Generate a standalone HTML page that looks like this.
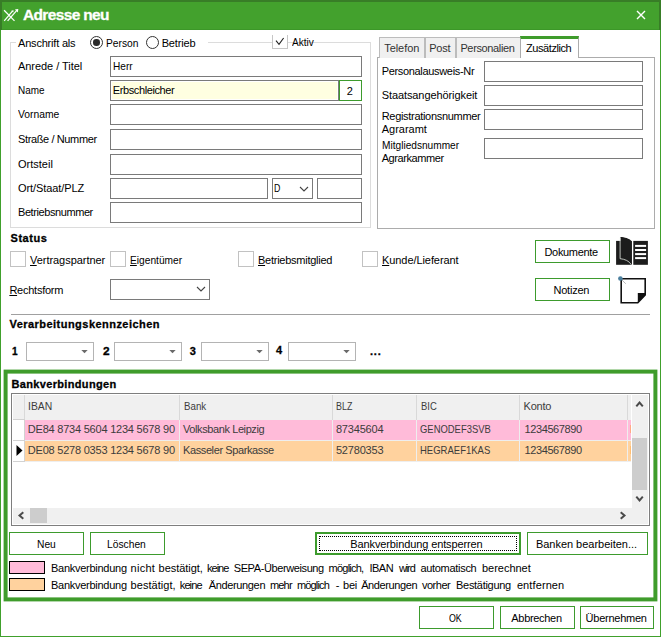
<!DOCTYPE html>
<html lang="de"><head><meta charset="utf-8"><title>Adresse neu</title>
<style>
*{box-sizing:border-box;margin:0;padding:0}
html,body{width:661px;height:637px;overflow:hidden;background:#fff}
body{font-family:"Liberation Sans","DejaVu Sans",sans-serif;font-size:11px;color:#000;position:relative}
.a{position:absolute;white-space:nowrap}
.t{position:absolute;white-space:nowrap;line-height:13px;height:13px}
.b{font-weight:bold;-webkit-text-stroke:0.3px currentColor}
.in{position:absolute;border:1px solid #7a7a7a;background:#fff;height:21px}
.cmb{position:absolute;border:1px solid #b4b4b4;background:#fff;height:19px;width:68px}
.btn{position:absolute;border:1px solid #3d9b2d;background:#fff;height:23px}
.cb{position:absolute;width:16px;height:16px;border:1px solid #c2c2c2;background:#fff}
.rd{position:absolute;width:13px;height:13px;border:1px solid #333;border-radius:50%;background:#fff}
.tab{position:absolute;top:37px;height:21px;border:1px solid #bcbcbc;border-bottom:none;background:#f0f0f0}
.hs{position:absolute;top:395px;width:1px;height:25px;background:#d9d9d9}
.rs{position:absolute;top:420px;width:1px;height:42px;background:#eee}
u{text-decoration:underline}
</style></head><body>
<!-- window frame -->
<div class="a" style="left:0;top:0;width:661px;height:637px;background:#40a02c"></div>
<div class="a" style="left:1px;top:30px;width:659px;height:606px;background:#fff"></div>
<div class="a" style="left:0;top:0;width:661px;height:30px;background:#387d27"></div>
<div class="a" style="left:2px;top:2px;width:657px;height:28px;background:#43a12d"></div>
<div class="a" style="left:2px;top:29px;width:657px;height:1px;background:#3c9728"></div>
<!-- title -->
<svg class="a" style="left:3px;top:8px" width="17" height="14" viewBox="0 0 17 14"><g stroke="#fff" stroke-width="1.25" fill="none"><path d="M1.1 2.3 L11.5 12.9"/><path d="M1.2 12.9 L9.7 2.9"/><path d="M4.6 12.9 L14.5 1.6"/></g><path d="M11.9 1.5 L15.3 1 L14.9 4.4 Z" fill="#fff"/><path d="M8.2 2.7 L10.7 2.2 L10.3 4.5 Z" fill="#fff" fill-opacity="0.9"/></svg>
<div class="a b" style="left:23px;top:5.5px;font-size:15.5px;line-height:18px;color:#fff;letter-spacing:-0.65px">Adresse neu</div>
<svg class="a" style="left:636px;top:10px" width="10" height="10" viewBox="0 0 10 10"><path d="M1 1 L9 9 M9 1 L1 9" stroke="#fff" stroke-width="1.4" fill="none"/></svg>

<!-- groupbox Anschrift -->
<div class="a" style="left:10px;top:42px;width:361px;height:186px;border:1px solid #dcdcdc"></div>
<div class="a" style="left:16px;top:36px;width:192px;height:14px;background:#fff"></div>
<div class="rd" style="left:90px;top:36px"></div>
<div class="a" style="left:93.2px;top:39.2px;width:6.6px;height:6.6px;border-radius:50%;background:#2a2a2a"></div>
<div class="rd" style="left:146px;top:36px"></div>
<div class="a" style="left:272px;top:35px;width:16px;height:14px;border:1px solid #c6c6c6;border-top:none;background:#fff"></div>
<svg class="a" style="left:274px;top:36px" width="12" height="11" viewBox="0 0 12 11"><path d="M2 4.7 L5 8.3 L9.6 2" stroke="#222" stroke-width="1.1" fill="none"/></svg>

<div class="in" style="left:110px;top:56px;width:252px"></div>
<div class="in" style="left:110px;top:80px;width:229px"></div><div class="a" style="left:112px;top:82px;width:225px;height:17px;background:#ffffe1"></div>
<div class="in" style="left:339px;top:80px;width:23px;border-color:#3d9b2d"></div>
<div class="in" style="left:110px;top:104px;width:252px"></div>
<div class="in" style="left:110px;top:129px;width:252px"></div>
<div class="in" style="left:110px;top:154px;width:252px"></div>
<div class="in" style="left:110px;top:178px;width:158px"></div>
<div class="in" style="left:272px;top:178px;width:41px"></div>
<svg class="a" style="left:299.3px;top:185.6px" width="10" height="7" viewBox="0 0 10 7"><path d="M1 1 L5 5 L9 1" stroke="#444" stroke-width="1.1" fill="none"/></svg>
<div class="in" style="left:317px;top:178px;width:45px"></div>
<div class="in" style="left:110px;top:202px;width:252px"></div>

<!-- tabs -->
<div class="a" style="left:377px;top:57px;width:278px;height:172px;border:1px solid #acacac;background:#fff"></div>
<div class="tab" style="left:379px;width:46px"></div>
<div class="tab" style="left:425px;width:31px"></div>
<div class="tab" style="left:456px;width:65px"></div>
<div class="a" style="left:520px;top:36px;width:59px;height:22px;border:1px solid #acacac;border-bottom:none;border-top:3px solid #3f9c2c;background:#fff"></div>
<div class="in" style="left:484px;top:61px;width:159px"></div>
<div class="in" style="left:484px;top:85px;width:159px"></div>
<div class="in" style="left:484px;top:109px;width:159px"></div>
<div class="in" style="left:484px;top:138px;width:159px"></div>

<!-- status -->
<div class="cb" style="left:10px;top:251px"></div>
<div class="cb" style="left:110px;top:251px"></div>
<div class="cb" style="left:238px;top:251px"></div>
<div class="cb" style="left:362px;top:251px"></div>
<div class="btn" style="left:535px;top:240px;width:75px"></div>
<div class="btn" style="left:535px;top:278px;width:75px"></div>
<!-- book icon -->
<svg class="a" style="left:615px;top:236px" width="34" height="30" viewBox="0 0 34 30">
<rect x="1.1" y="4.9" width="15.7" height="23.9" fill="#1c1c1c"/>
<rect x="18.3" y="4.9" width="14.6" height="23.9" fill="#1c1c1c"/>
<path d="M5.4 1.1 C9.5 1.3 14.2 2.3 16.8 5.4 L16.8 28.8 C14.5 24.9 10 22.8 5.4 22.4 Z" fill="#1c1c1c"/>
<path d="M5.1 1.6 L5.1 22.7 C10 23.1 14 25 16.3 28.6" fill="none" stroke="#f2f7f0" stroke-width="0.75"/>
<g fill="#fff"><rect x="20.1" y="8.9" width="11" height="2"/><rect x="20.1" y="13" width="11" height="2"/><rect x="20.1" y="17.1" width="11" height="2"/><rect x="20.1" y="21.1" width="11" height="2"/></g>
</svg>
<!-- note icon -->
<svg class="a" style="left:616px;top:274px" width="34" height="32" viewBox="0 0 34 32">
<path d="M5.2 4.7 L29.2 4.7 L29.2 21 L21.8 28.8 L5.2 28.8 Z" fill="#fff" stroke="#111" stroke-width="1.6" stroke-linejoin="miter"/>
<path d="M21.8 18.9 L29.2 18.9 L29.2 21 L21.8 28.6 Z" fill="#111"/>
<path d="M6 6 L9.8 9.8" stroke="#888" stroke-width="0.6"/>
<circle cx="4.4" cy="4.5" r="2.3" fill="#4a7f9e"/>
</svg>
<div class="in" style="left:110px;top:279px;width:100px"></div>
<svg class="a" style="left:196px;top:286px" width="10" height="7" viewBox="0 0 10 7"><path d="M1 1 L5 5 L9 1" stroke="#444" stroke-width="1.1" fill="none"/></svg>
<div class="a" style="left:11px;top:314px;width:639px;height:1px;background:#a0a0a0"></div>

<!-- Verarbeitungskennzeichen -->
<div class="cmb" style="left:26px;top:342px"></div>
<div class="cmb" style="left:114px;top:342px"></div>
<div class="cmb" style="left:201px;top:342px"></div>
<div class="cmb" style="left:288px;top:342px"></div>
<svg class="a" style="left:81px;top:350px" width="7" height="4" viewBox="0 0 7 4"><path d="M0.3 0 L6.7 0 L3.5 3.2 Z" fill="#6a6a6a"/></svg>
<svg class="a" style="left:169px;top:350px" width="7" height="4" viewBox="0 0 7 4"><path d="M0.3 0 L6.7 0 L3.5 3.2 Z" fill="#6a6a6a"/></svg>
<svg class="a" style="left:256px;top:350px" width="7" height="4" viewBox="0 0 7 4"><path d="M0.3 0 L6.7 0 L3.5 3.2 Z" fill="#6a6a6a"/></svg>
<svg class="a" style="left:343px;top:350px" width="7" height="4" viewBox="0 0 7 4"><path d="M0.3 0 L6.7 0 L3.5 3.2 Z" fill="#6a6a6a"/></svg>

<!-- bank -->
<svg class="a" style="left:0;top:365px" width="661" height="240" viewBox="0 0 661 240"><rect x="5.6" y="6.6" width="649.8" height="227.8" fill="none" stroke="#3f9c2b" stroke-width="4"/></svg>
<div class="a" style="left:11px;top:393px;width:639px;height:133px;border:1px solid #7e7e7e;background:#fff"></div>
<!-- grid -->
<div class="a" style="left:13px;top:395px;width:618px;height:25px;background:#f0f0f0"></div>
<div class="hs" style="left:24px"></div><div class="hs" style="left:179px"></div><div class="hs" style="left:332px"></div><div class="hs" style="left:416px"></div><div class="hs" style="left:519px"></div><div class="hs" style="left:627px"></div>
<div class="a" style="left:25px;top:420px;width:606px;height:20px;background:#ffbbd9"></div>
<div class="a" style="left:25px;top:441px;width:606px;height:20px;background:#ffd29e"></div>
<div class="rs" style="left:179px"></div><div class="rs" style="left:332px"></div><div class="rs" style="left:416px"></div><div class="rs" style="left:519px"></div><div class="rs" style="left:627px"></div>
<div class="a" style="left:25px;top:440px;width:606px;height:1px;background:#eee"></div><div class="a" style="left:25px;top:461px;width:606px;height:1px;background:#eee"></div><div class="a" style="left:630px;top:425px;width:1px;height:8px;background:#ffab85"></div><div class="a" style="left:630px;top:446px;width:1px;height:8px;background:#ffbe73"></div>
<div class="a" style="left:13px;top:419px;width:12px;height:1px;background:#d2d2d2"></div><div class="a" style="left:13px;top:440px;width:12px;height:1px;background:#d2d2d2"></div><div class="a" style="left:13px;top:461px;width:12px;height:1px;background:#d2d2d2"></div><div class="a" style="left:24px;top:420px;width:1px;height:42px;background:#d2d2d2"></div>
<svg class="a" style="left:15.7px;top:444.7px" width="7" height="11" viewBox="0 0 7 11"><path d="M0.5 0 L6.5 5.5 L0.5 11 Z" fill="#000"/></svg>
<!-- scrollbars -->
<div class="a" style="left:631px;top:395px;width:1px;height:113px;background:#fff"></div><div class="a" style="left:632px;top:395px;width:16px;height:129px;background:#f0f0f0"></div>
<div class="a" style="left:13px;top:507.5px;width:635px;height:16.5px;background:#f0f0f0"></div>
<div class="a" style="left:632px;top:438px;width:15px;height:52px;background:#cdcdcd"></div>
<div class="a" style="left:30px;top:508px;width:17px;height:15px;background:#cdcdcd"></div>
<svg class="a" style="left:635px;top:399.6px" width="9" height="8" viewBox="0 0 9 8"><path d="M1.3 6.4 L4.55 2.6 L7.8 6.4" stroke="#4a4a4a" stroke-width="2" fill="none"/></svg>
<svg class="a" style="left:635px;top:495.2px" width="9" height="8" viewBox="0 0 9 8"><path d="M1.3 1.6 L4.55 5.4 L7.8 1.6" stroke="#4a4a4a" stroke-width="2" fill="none"/></svg>
<svg class="a" style="left:17px;top:511px" width="8" height="9" viewBox="0 0 8 9"><path d="M6.3 1.2 L2.5 4.45 L6.3 7.7" stroke="#4a4a4a" stroke-width="2" fill="none"/></svg>
<svg class="a" style="left:619px;top:511px" width="8" height="9" viewBox="0 0 8 9"><path d="M1.7 1.2 L5.5 4.45 L1.7 7.7" stroke="#4a4a4a" stroke-width="2" fill="none"/></svg>

<div class="btn" style="left:9px;top:532px;width:75px"></div>
<div class="btn" style="left:90px;top:532px;width:75px"></div>
<div class="btn" style="left:315px;top:532px;width:206px;border-width:2px"></div>
<div class="a" style="left:319px;top:536px;width:198px;height:15px;border:1px dotted #000"></div>
<div class="btn" style="left:527px;top:532px;width:121px"></div>
<div class="a" style="left:9px;top:561px;width:36px;height:13px;border:1px solid #000;background:#ffbbd9"></div>
<div class="a" style="left:9px;top:578px;width:36px;height:13px;border:1px solid #000;background:#ffd29e"></div>

<div class="btn" style="left:419px;top:606px;width:75px"></div>
<div class="btn" style="left:500px;top:606px;width:75px"></div>
<div class="btn" style="left:580px;top:606px;width:74px"></div>
<div class="t" style="left:18.00px;top:37px;letter-spacing:-0.192px">Anschrift als</div>
<div class="t" style="left:105.60px;top:37px;letter-spacing:0;transform:scaleX(0.9328);transform-origin:0 0">Person</div>
<div class="t" style="left:161.70px;top:37px;letter-spacing:-0.173px">Betrieb</div>
<div class="t" style="left:292.30px;top:36px;letter-spacing:0;transform:scaleX(0.9122);transform-origin:0 0">Aktiv</div>
<div class="t" style="left:18.00px;top:60px;letter-spacing:-0.051px">Anrede / Titel</div>
<div class="t" style="left:18.00px;top:84px;letter-spacing:0;transform:scaleX(0.9033);transform-origin:0 0">Name</div>
<div class="t" style="left:18.00px;top:108px;letter-spacing:0;transform:scaleX(0.9383);transform-origin:0 0">Vorname</div>
<div class="t" style="left:18.00px;top:133px;letter-spacing:-0.377px">Straße / Nummer</div>
<div class="t" style="left:18.00px;top:158px;letter-spacing:0">Ortsteil</div>
<div class="t" style="left:18.00px;top:182px;letter-spacing:-0.094px">Ort/Staat/PLZ</div>
<div class="t" style="left:18.00px;top:206px;letter-spacing:-0.418px">Betriebsnummer</div>
<div class="t" style="left:112.80px;top:60px;letter-spacing:0;transform:scaleX(0.9160);transform-origin:0 0">Herr</div>
<div class="t" style="left:112.80px;top:84px;letter-spacing:-0.398px">Erbschleicher</div>
<div class="t" style="left:346.80px;top:85px;letter-spacing:0">2</div>
<div class="t" style="left:274.40px;top:182px;letter-spacing:0;transform:scaleX(0.8000);transform-origin:0 0">D</div>
<div class="t" style="left:384.20px;top:42px;letter-spacing:-0.059px;color:#333">Telefon</div>
<div class="t" style="left:429.20px;top:42px;letter-spacing:-0.252px;color:#333">Post</div>
<div class="t" style="left:460.40px;top:42px;letter-spacing:-0.358px;color:#333">Personalien</div>
<div class="t" style="left:526.00px;top:42px;letter-spacing:-0.422px">Zusätzlich</div>
<div class="t" style="left:381.70px;top:65px;letter-spacing:-0.327px">Personalausweis-Nr</div>
<div class="t" style="left:381.70px;top:89px;letter-spacing:-0.088px">Staatsangehörigkeit</div>
<div class="t" style="left:381.70px;top:110px;letter-spacing:-0.304px">Registrationsnummer</div>
<div class="t" style="left:381.70px;top:123px;letter-spacing:0">Agraramt</div>
<div class="t" style="left:381.70px;top:139px;letter-spacing:0;transform:scaleX(0.9205);transform-origin:0 0">Mitgliedsnummer</div>
<div class="t" style="left:381.70px;top:152px;letter-spacing:-0.426px">Agrarkammer</div>
<div class="t b" style="left:10.50px;top:232px;letter-spacing:0.540px">Status</div>
<div class="t" style="left:30.00px;top:254px;letter-spacing:-0.040px"><u>V</u>ertragspartner</div>
<div class="t" style="left:130.00px;top:254px;letter-spacing:0;transform:scaleX(0.9260);transform-origin:0 0"><u>E</u>igentümer</div>
<div class="t" style="left:258.00px;top:254px;letter-spacing:-0.256px"><u>B</u>etriebsmitglied</div>
<div class="t" style="left:382.00px;top:254px;letter-spacing:-0.073px"><u>K</u>unde/Lieferant</div>
<div class="t" style="left:9.40px;top:284px;letter-spacing:-0.252px"><u>R</u>echtsform</div>
<div class="t" style="left:544.50px;top:245.5px;letter-spacing:-0.342px">Dokumente</div>
<div class="t" style="left:553.50px;top:283.5px;letter-spacing:-0.230px">Notizen</div>
<div class="t b" style="left:9.50px;top:318px;letter-spacing:0.463px">Verarbeitungskennzeichen</div>
<div class="t b" style="left:12.00px;top:345px;letter-spacing:0;transform:scaleX(0.9167);transform-origin:0 0">1</div>
<div class="t b" style="left:102.80px;top:345px;letter-spacing:0;transform:scaleX(1.0833);transform-origin:0 0">2</div>
<div class="t b" style="left:189.70px;top:345px;letter-spacing:0">3</div>
<div class="t b" style="left:276.00px;top:344px;letter-spacing:0">4</div>
<div class="t b" style="left:370.00px;top:345px;letter-spacing:0.794px">...</div>
<div class="t b" style="left:11.50px;top:378px;letter-spacing:0.340px">Bankverbindungen</div>
<div class="t" style="left:27.76px;top:400px;letter-spacing:0;transform:scaleX(0.9422);transform-origin:0 0;color:#3c3c3c">IBAN</div>
<div class="t" style="left:183.60px;top:400px;letter-spacing:0;transform:scaleX(0.8838);transform-origin:0 0;color:#3c3c3c">Bank</div>
<div class="t" style="left:336.40px;top:400px;letter-spacing:0;transform:scaleX(0.8116);transform-origin:0 0;color:#3c3c3c">BLZ</div>
<div class="t" style="left:420.90px;top:400px;letter-spacing:0;transform:scaleX(0.8590);transform-origin:0 0;color:#3c3c3c">BIC</div>
<div class="t" style="left:523.60px;top:400px;letter-spacing:-0.257px;color:#3c3c3c">Konto</div>
<div class="t" style="left:27.80px;top:423px;letter-spacing:-0.219px;color:#3c3c3c">DE84 8734 5604 1234 5678 90</div>
<div class="t" style="left:183.00px;top:423px;letter-spacing:-0.403px;color:#3c3c3c">Volksbank Leipzig</div>
<div class="t" style="left:335.90px;top:423px;letter-spacing:-0.175px;color:#3c3c3c">87345604</div>
<div class="t" style="left:419.80px;top:423px;letter-spacing:0;transform:scaleX(0.8578);transform-origin:0 0;color:#3c3c3c">GENODEF3SVB</div>
<div class="t" style="left:524.50px;top:423px;letter-spacing:-0.395px;color:#3c3c3c">1234567890</div>
<div class="t" style="left:27.80px;top:444px;letter-spacing:-0.219px;color:#3c3c3c">DE08 5278 0353 1234 5678 90</div>
<div class="t" style="left:183.00px;top:444px;letter-spacing:-0.394px;color:#3c3c3c">Kasseler Sparkasse</div>
<div class="t" style="left:335.90px;top:444px;letter-spacing:-0.175px;color:#3c3c3c">52780353</div>
<div class="t" style="left:419.80px;top:444px;letter-spacing:0;transform:scaleX(0.8646);transform-origin:0 0;color:#3c3c3c">HEGRAEF1KAS</div>
<div class="t" style="left:524.50px;top:444px;letter-spacing:-0.395px;color:#3c3c3c">1234567890</div>
<div class="t" style="left:36.70px;top:537.5px;letter-spacing:0;transform:scaleX(0.9321);transform-origin:0 0">Neu</div>
<div class="t" style="left:107.30px;top:537.5px;letter-spacing:0;transform:scaleX(0.9332);transform-origin:0 0">Löschen</div>
<div class="t" style="left:350.30px;top:538px;letter-spacing:-0.114px">Bankverbindung entsperren</div>
<div class="t" style="left:535.90px;top:537.5px;letter-spacing:-0.019px">Banken bearbeiten...</div>
<div class="t" style="left:449.00px;top:612px;letter-spacing:0;transform:scaleX(0.8033);transform-origin:0 0">OK</div>
<div class="t" style="left:511.30px;top:612px;letter-spacing:-0.311px">Abbrechen</div>
<div class="t" style="left:585.60px;top:612px;letter-spacing:-0.253px">Übernehmen</div>
<div class="t" style="left:0;top:561.5px;width:600px"><span style="position:absolute;left:51.00px;top:0;letter-spacing:-0.268px">Bankverbindung</span> <span style="position:absolute;left:130.60px;top:0;letter-spacing:0.255px">nicht</span> <span style="position:absolute;left:158.60px;top:0;letter-spacing:-0.043px">bestätigt,</span> <span style="position:absolute;left:207.00px;top:0;letter-spacing:-0.995px">keine</span> <span style="position:absolute;left:233.70px;top:0;letter-spacing:-0.392px">SEPA-Überweisung</span> <span style="position:absolute;left:328.60px;top:0;letter-spacing:-0.786px">möglich,</span> <span style="position:absolute;left:369.50px;top:0;letter-spacing:-0.510px">IBAN</span> <span style="position:absolute;left:398.90px;top:0;letter-spacing:-1.084px">wird</span> <span style="position:absolute;left:420.40px;top:0;letter-spacing:-0.299px">automatisch</span> <span style="position:absolute;left:482.00px;top:0;letter-spacing:-0.021px">berechnet</span></div>
<div class="t" style="left:0;top:578.5px;width:600px"><span style="position:absolute;left:51.00px;top:0;letter-spacing:-0.268px">Bankverbindung</span> <span style="position:absolute;left:130.60px;top:0;letter-spacing:0.046px">bestätigt,</span> <span style="position:absolute;left:179.80px;top:0;letter-spacing:-0.895px">keine</span> <span style="position:absolute;left:208.70px;top:0;letter-spacing:-0.347px">Änderungen</span> <span style="position:absolute;left:269.90px;top:0;letter-spacing:-0.799px">mehr</span> <span style="position:absolute;left:296.90px;top:0;letter-spacing:-0.814px">möglich</span> <span style="position:absolute;left:335.70px;top:0;letter-spacing:0.000px">-</span> <span style="position:absolute;left:343.00px;top:0;letter-spacing:-0.218px">bei</span> <span style="position:absolute;left:361.20px;top:0;letter-spacing:-0.403px">Änderungen</span> <span style="position:absolute;left:421.90px;top:0;letter-spacing:-0.463px">vorher</span> <span style="position:absolute;left:456.10px;top:0;letter-spacing:-0.308px">Bestätigung</span> <span style="position:absolute;left:516.90px;top:0;letter-spacing:0.105px">entfernen</span></div>
</body></html>
